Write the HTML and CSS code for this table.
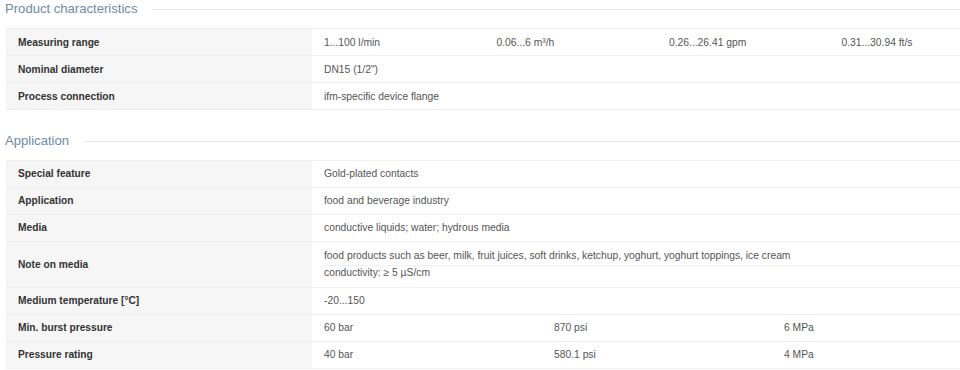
FILE: index.html
```html
<!DOCTYPE html>
<html lang="en">
<head>
<meta charset="utf-8">
<title>Product characteristics</title>
<link rel="stylesheet" href="styles.css">
</head>
<body>
<section class="group">
  <h2 class="group-title"><span>Product characteristics</span></h2>
  <div class="spec spec-first">
    <div class="row">
      <div class="label">Measuring range</div>
      <div class="value cols4"><span>1...100 l/min</span><span>0.06...6 m³/h</span><span>0.26...26.41 gpm</span><span>0.31...30.94 ft/s</span></div>
    </div>
    <div class="row">
      <div class="label">Nominal diameter</div>
      <div class="value">DN15 (1/2")</div>
    </div>
    <div class="row">
      <div class="label">Process connection</div>
      <div class="value">ifm-specific device flange</div>
    </div>
  </div>
</section>
<section class="group">
  <h2 class="group-title"><span>Application</span></h2>
  <div class="spec">
    <div class="row">
      <div class="label">Special feature</div>
      <div class="value">Gold-plated contacts</div>
    </div>
    <div class="row">
      <div class="label">Application</div>
      <div class="value">food and beverage industry</div>
    </div>
    <div class="row">
      <div class="label">Media</div>
      <div class="value">conductive liquids; water; hydrous media</div>
    </div>
    <div class="row">
      <div class="label">Note on media</div>
      <div class="value multi">
        <div class="line">food products such as beer, milk, fruit juices, soft drinks, ketchup, yoghurt, yoghurt toppings, ice cream</div>
        <div class="line">conductivity: ≥ 5 µS/cm</div>
      </div>
    </div>
    <div class="row">
      <div class="label">Medium temperature [°C]</div>
      <div class="value">-20...150</div>
    </div>
    <div class="row">
      <div class="label">Min. burst pressure</div>
      <div class="value cols3"><span>60 bar</span><span>870 psi</span><span>6 MPa</span></div>
    </div>
    <div class="row">
      <div class="label">Pressure rating</div>
      <div class="value cols3"><span>40 bar</span><span>580.1 psi</span><span>4 MPa</span></div>
    </div>
  </div>
</section>
</body>
</html>
```
FILE: styles.css
```css
html, body {
  margin: 0;
  padding: 0;
  background: #fff;
  overflow: hidden;
}
body {
  font-family: "Liberation Sans", Arial, sans-serif;
  width: 1002px;
}
.group {
  padding-left: 6px;
}
.group + .group {
  margin-top: 22px;
}
.group-title {
  display: flex;
  align-items: center;
  margin: 0 0 10px -1px;
  font-size: 13.1px;
  line-height: 18px;
  font-weight: normal;
  color: #6e8ba5;
}
.group-title::after {
  content: "";
  flex: 1;
  border-top: 1px solid #e8e8e8;
  margin-left: 15px;
}
.spec {
  border-top: 1px solid #efefef;
}
.spec-first {
  margin-top: 1px;
}
.spec-first .label,
.spec-first .value {
  padding-top: 7px;
  padding-bottom: 5px;
}
.row {
  display: grid;
  grid-template-columns: 306px 690px;
  border-bottom: 1px solid #efefef;
}
.label {
  display: flex;
  align-items: center;
  background: #f6f6f6;
  padding: 6px 12px;
  font-size: 10.2px;
  line-height: 14px;
  font-weight: bold;
  color: #333;
}
.value {
  display: flex;
  align-items: center;
  padding: 6px 12px;
  font-size: 10.3px;
  line-height: 14px;
  color: #555;
}
.cols4, .cols3 {
  display: grid;
}
.spec .cols4, .spec .cols3 {
  padding-left: 0;
  padding-right: 0;
}
.cols4 { grid-template-columns: repeat(4, 1fr); }
.cols3 { grid-template-columns: repeat(3, 1fr); }
.cols4 span, .cols3 span { padding-left: 12px; }
.multi {
  display: block;
  padding: 0 0 0 12px;
}
.multi .line {
  padding: 7px 0 2px;
}
.multi .line + .line {
  border-top: 1px solid #efefef;
  padding: 0 0 7px;
}
```
